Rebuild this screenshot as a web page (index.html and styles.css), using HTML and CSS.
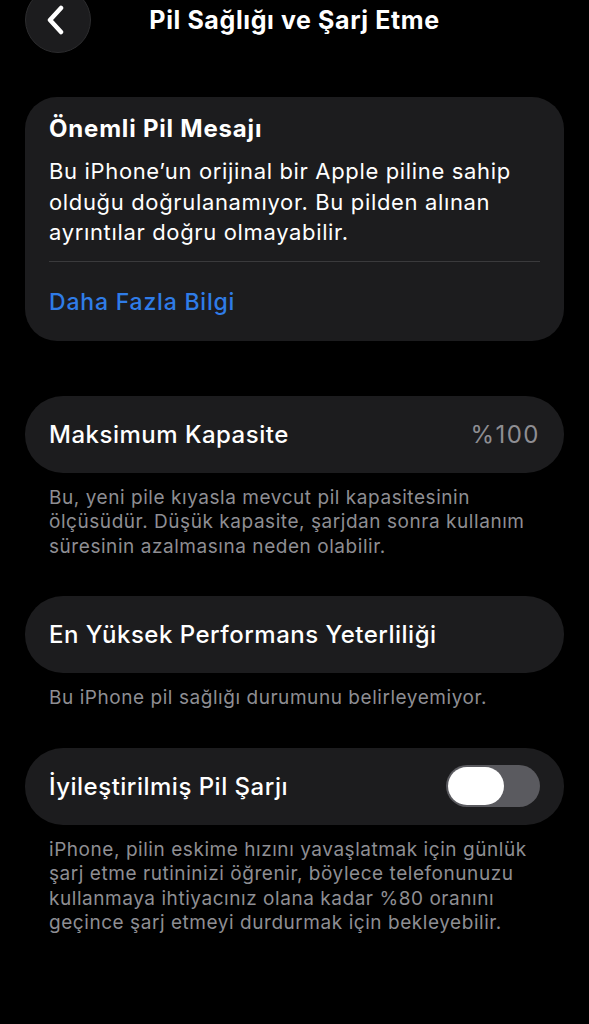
FILE: index.html
```html
<!DOCTYPE html>
<html lang="tr">
<head>
  <meta charset="UTF-8">
  <meta name="viewport" content="width=device-width, initial-scale=1.0">
  <title>Pil Sağlığı ve Şarj Etme</title>
  <link rel="stylesheet" href="styles.css">
</head>
<body>
  <!-- Header -->
  <header class="nav">
    <button class="back-btn" aria-label="Geri">
      <svg width="20" height="30" viewBox="0 0 20 30">
        <path d="M15 3 L4 15 L15 27" fill="none" stroke="#fff" stroke-width="4.5" stroke-linecap="round" stroke-linejoin="round"/>
      </svg>
    </button>
    <h1 class="nav-title">Pil Sağlığı ve Şarj Etme</h1>
    <span></span>
  </header>

  <!-- Important message -->
  <section class="card message">
    <h2 class="message-title">Önemli Pil Mesajı</h2>
    <p class="message-text">Bu iPhone’un orijinal bir Apple piline sahip olduğu doğrulanamıyor. Bu pilden alınan ayrıntılar doğru olmayabilir.</p>
    <div class="divider"></div>
    <a class="link" href="#">Daha Fazla Bilgi</a>
  </section>

  <!-- Capacity -->
  <section class="card row first">
    <span class="row-label">Maksimum Kapasite</span>
    <span class="row-value">%100</span>
  </section>
  <p class="note">Bu, yeni pile kıyasla mevcut pil kapasitesinin ölçüsüdür. Düşük kapasite, şarjdan sonra kullanım süresinin azalmasına neden olabilir.</p>

  <!-- Performance -->
  <section class="card row">
    <span class="row-label">En Yüksek Performans Yeterliliği</span>
  </section>
  <p class="note">Bu iPhone pil sağlığı durumunu belirleyemiyor.</p>

  <!-- Optimized charging -->
  <section class="card row">
    <span class="row-label">İyileştirilmiş Pil Şarjı</span>
    <span class="toggle"><span class="knob"></span></span>
  </section>
  <p class="note">iPhone, pilin eskime hızını yavaşlatmak için günlük şarj etme rutininizi öğrenir, böylece telefonunuzu kullanmaya ihtiyacınız olana kadar %80 oranını geçince şarj etmeyi durdurmak için bekleyebilir.</p>
</body>
</html>
```

FILE: styles.css
```css
/* General */
body {
  margin: 0;
  padding: 0 25px;
  background: #000;
  color: #fff;
  font-family: 'Inter', 'Noto Sans', sans-serif;
  overflow: hidden;
}

/* Header */
.nav {
  display: grid;
  grid-template-columns: 66px 1fr 66px;
  align-items: center;
  margin-top: -13px;
}

.back-btn {
  width: 66px;
  height: 66px;
  border-radius: 50%;
  background: #1c1c1e;
  border: 1px solid #2c2c2e;
  display: flex;
  align-items: center;
  justify-content: center;
  padding: 0 4px 0 0;
}

.nav-title {
  margin: 0;
  text-align: center;
  font-size: 25px;
  font-weight: 700;
  letter-spacing: 0.6px;
}

/* Cards */
.card {
  background: #1c1c1e;
  border-radius: 32px;
  padding: 0 24px;
}

.message {
  margin-top: 44px;
  padding: 18px 24px 25px;
}

.message-title {
  margin: 0;
  font-size: 24px;
  line-height: 28px;
  font-weight: 700;
  letter-spacing: 0.8px;
}

.message-text {
  margin: 13px 0 0;
  font-size: 22px;
  line-height: 30.5px;
  letter-spacing: 0.65px;
}

.divider {
  height: 1px;
  background: #3a3a3c;
  margin-top: 13px;
}

.link {
  display: block;
  margin-top: 26px;
  color: #2f7ce8;
  font-size: 23px;
  line-height: 28px;
  font-weight: 500;
  letter-spacing: 0.8px;
  text-decoration: none;
}

.row {
  height: 77px;
  display: flex;
  align-items: center;
  justify-content: space-between;
  border-radius: 38px;
  margin-top: 37px;
}

.row.first {
  margin-top: 55px;
}

.row-label {
  font-size: 24px;
  font-weight: 500;
  letter-spacing: 0.5px;
}

.row-value {
  font-size: 24px;
  color: #8e8e93;
  letter-spacing: 1.5px;
}

/* Toggle */
.toggle {
  width: 94px;
  height: 42px;
  border-radius: 21px;
  background: #5a5a5f;
  display: flex;
  align-items: center;
  padding-left: 2px;
  box-sizing: border-box;
}

.knob {
  width: 56px;
  height: 38px;
  border-radius: 19px;
  background: #fff;
}

/* Footnotes */
.note {
  margin: 13px 0 0;
  padding: 0 24px;
  font-size: 19px;
  line-height: 24.5px;
  letter-spacing: 0.55px;
  color: #8e8e93;
}
```
